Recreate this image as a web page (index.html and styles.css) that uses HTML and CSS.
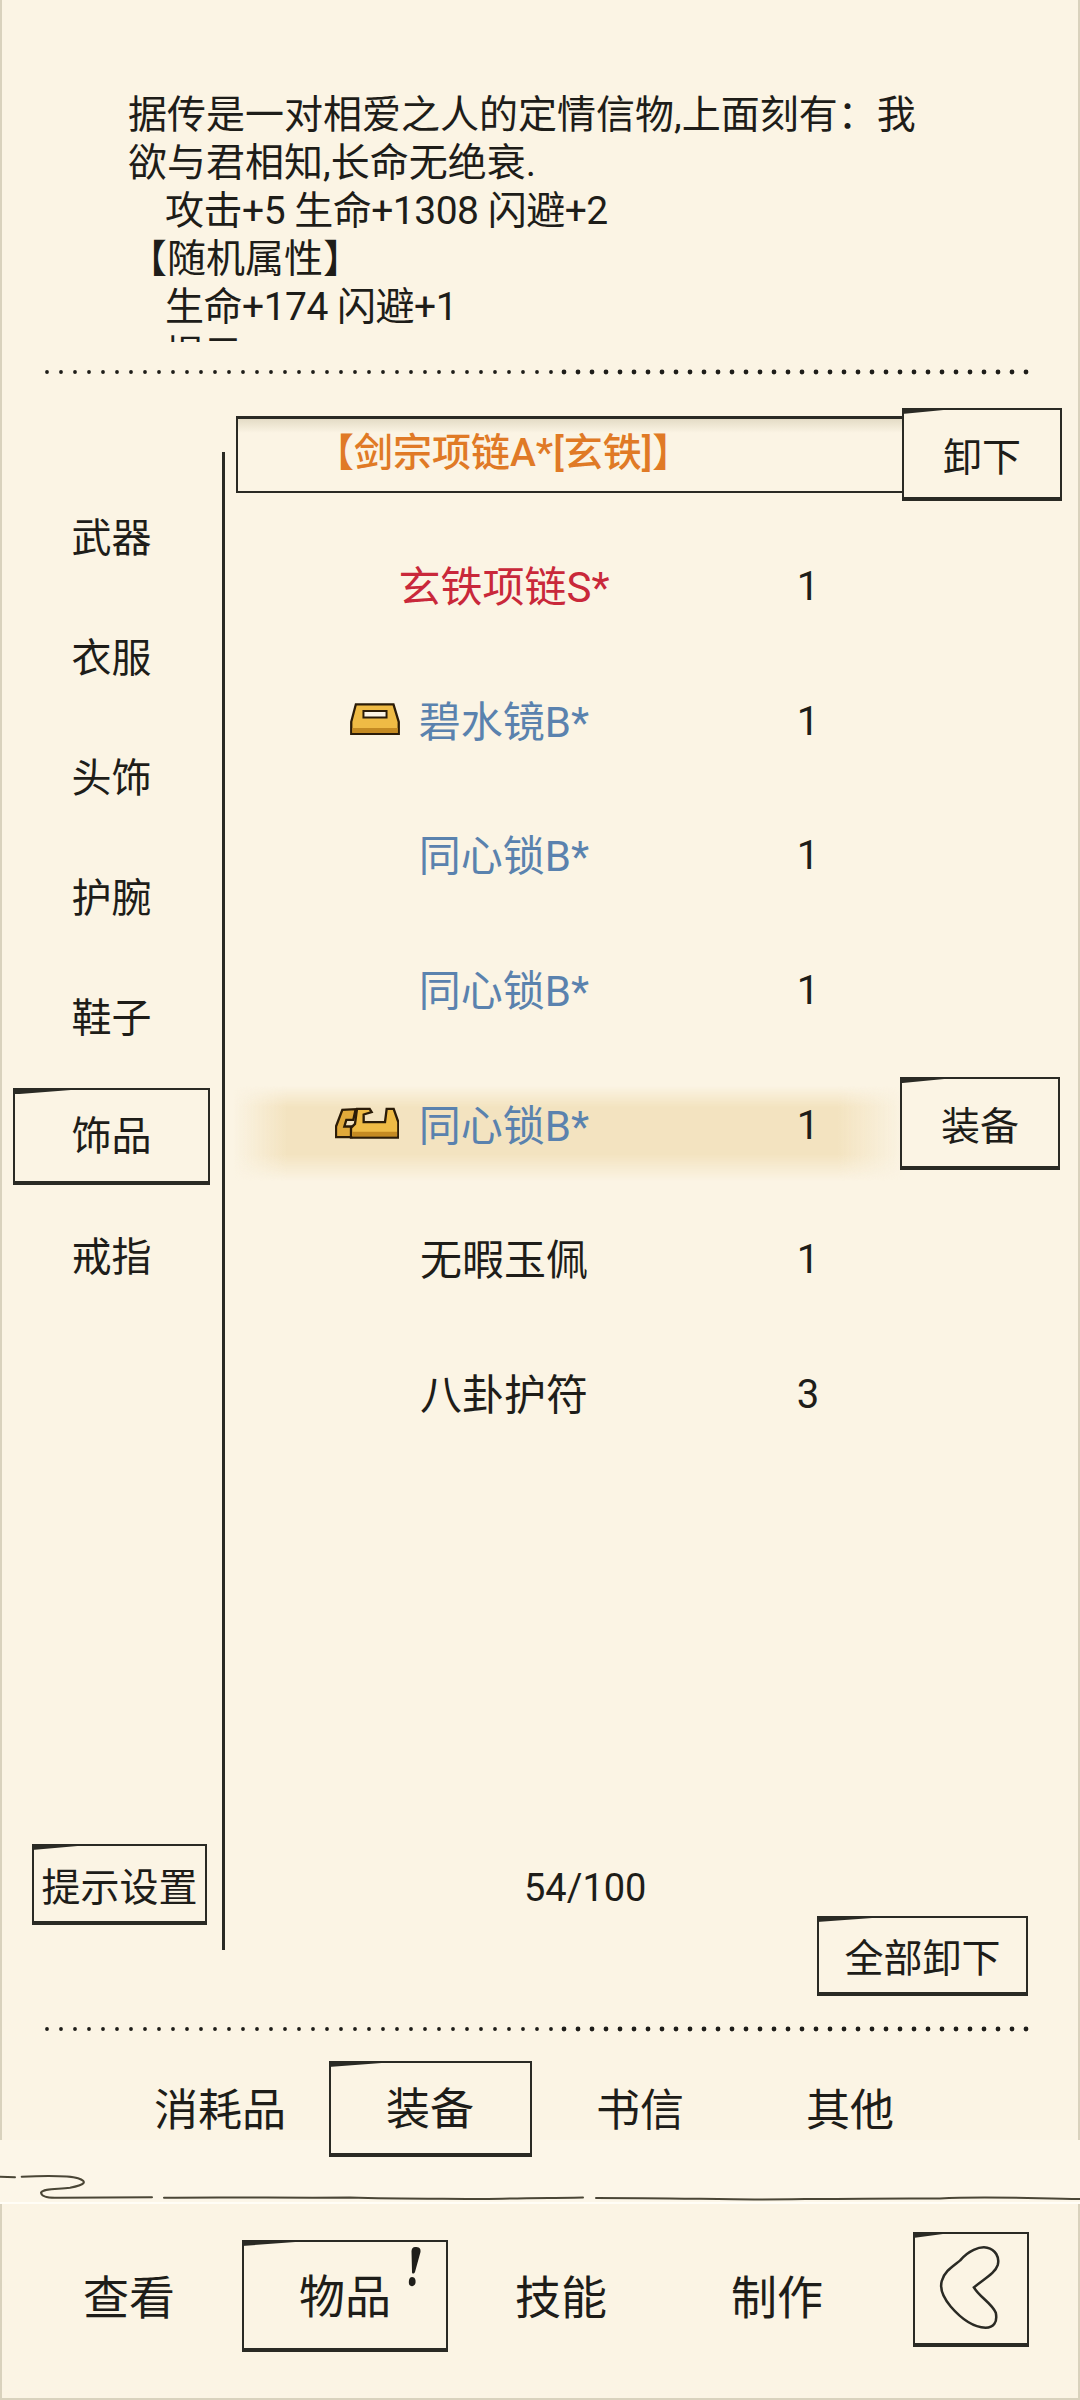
FILE: index.html
```html
<!DOCTYPE html>
<html lang="zh-CN">
<head>
    <meta charset="UTF-8">
    <title>物品</title>
    <link rel="stylesheet" href="styles.css">
</head>
<body>
<div class="page">
    <section class="desc">
        <p>据传是一对相爱之人的定情信物,上面刻有：我</p>
        <p>欲与君相知,长命无绝衰.</p>
        <p class="indent">攻击+5 生命+1308 闪避+2</p>
        <p>【随机属性】</p>
        <p class="indent">生命+174 闪避+1</p>
        <p class="indent">提示</p>
    </section>
    <svg class="dots" viewBox="0 0 992 6">
        <line class="dots-small" x1="3" y1="3" x2="520" y2="3"/>
        <line class="dots-big" x1="520" y1="3" x2="990" y2="3"/>
    </svg>

    <section class="main">
        <aside class="side">
            <a class="side-item">武器</a>
            <a class="side-item">衣服</a>
            <a class="side-item">头饰</a>
            <a class="side-item">护腕</a>
            <a class="side-item">鞋子</a>
            <a class="side-item sk">饰品</a>
            <a class="side-item">戒指</a>
            <a class="sk btn hint">提示设置</a>
        </aside>
        <div class="content">
            <div class="equipped">
                <div class="equipped-name">【剑宗项链A*[玄铁]】</div>
                <a class="sk btn row-btn">卸下</a>
            </div>
            <ul class="list">
                <li class="row"><span class="name red">玄铁项链S*</span><span class="num">1</span></li>
                <li class="row">
                    <span class="name blue">
                        <svg class="icon icon-one" viewBox="0 0 150 97">
                            <path d="M17 4H131L147 57V94H3V57Z" fill="#efbb45" stroke="#2b1c08" stroke-width="7"/>
                            <path d="M6 76H144V91H6Z" fill="#c48a22"/>
                            <path d="M40 24H110V44H40Z" fill="#fbf4e4" stroke="#2b1c08" stroke-width="6"/>
                        </svg>
                        碧水镜B*
                    </span>
                    <span class="num">1</span>
                </li>
                <li class="row"><span class="name blue">同心锁B*</span><span class="num">1</span></li>
                <li class="row"><span class="name blue">同心锁B*</span><span class="num">1</span></li>
                <li class="row picked">
                    <span class="name blue">
                        <svg class="icon icon-two" viewBox="0 0 192 95">
                            <path d="M3 90V58L22 8L62 6L55 38H34L28 58H50V90Z" fill="#e0a93a" stroke="#2b1c08" stroke-width="7"/>
                            <path d="M48 91V62L60 50L66 5H104L110 15L86 22V45H150L155 5H176L190 45V91Z" fill="#efbb45" stroke="#2b1c08" stroke-width="7"/>
                            <path d="M52 74H186V88H52Z" fill="#c48a22"/>
                        </svg>
                        同心锁B*
                    </span>
                    <span class="num">1</span>
                    <a class="sk btn row-btn">装备</a>
                </li>
                <li class="row"><span class="name">无暇玉佩</span><span class="num">1</span></li>
                <li class="row"><span class="name">八卦护符</span><span class="num">3</span></li>
            </ul>
            <div class="bag-count">54/100</div>
            <a class="sk btn unload-all">全部卸下</a>
        </div>
    </section>

    <svg class="dots dots-low" viewBox="0 0 992 6">
        <line class="dots-small" x1="3" y1="3" x2="520" y2="3"/>
        <line class="dots-big" x1="520" y1="3" x2="990" y2="3"/>
    </svg>

    <nav class="tabs">
        <a class="tab">消耗品</a>
        <a class="tab sk">装备</a>
        <a class="tab">书信</a>
        <a class="tab">其他</a>
    </nav>

    <div class="strip">
        <svg class="squiggle" viewBox="0 0 1080 62" fill="none" stroke="#4a4636" stroke-width="2" stroke-linecap="round">
            <path d="M0 36.7L15 37.3M21.7 36.7C40 36 66.7 35 78 38.3C88 41.7 85 45 70 47.7C56.7 49.3 43 48.3 41 52.7C41.7 57.3 50 58.3 60 57.7L152 57.3"/>
            <path d="M164 57.7C220 57 300 58 350 57.5C400 59 450 58.5 482 59C520 58 560 58 583 57.5"/>
            <path d="M596 58C660 58 700 59 760 59.5C820 59 880 58 940 58.5C980 56 1020 58 1080 59"/>
        </svg>
    </div>

    <nav class="bottom">
        <a class="bottom-item">查看</a>
        <a class="bottom-item sk">物品
            <svg class="alert" viewBox="0 0 16 40"><path d="M9 0C13 0 15 1 14.500 5L9 25C8 27 6 27 6 25L5.500 4C6 1 7 0 9 0ZM6 30C9 30 10 33 9.500 36C8.500 40 4 40 3 37C2.500 33 3.500 30 6 30Z" fill="#1f1e1a"/></svg>
        </a>
        <a class="bottom-item">技能</a>
        <a class="bottom-item">制作</a>
        <a class="sk back">
            <svg class="back-icon" viewBox="100 97 348 343" fill="none" stroke="#2a2a24" stroke-width="8">
                <path d="M240 180C265 150 300 135 325 140C350 145 365 170 358 195C350 220 320 235 283 265C300 295 340 315 352 345C358 375 345 392 320 392C280 390 240 360 210 325C185 295 175 270 182 245C190 215 215 200 240 180Z"/>
            </svg>
        </a>
    </nav>
</div>
</body>
</html>
```

FILE: styles.css
```css
*{
    margin: 0;
    padding: 0;
    box-sizing: border-box;
}
body{
    background: #fbf4e4;
    color: #1e1d19;
    font-family: Roboto, "Noto Sans CJK SC", sans-serif;
}
.page{
    width: 1080px;
    height: 2400px;
    overflow: hidden;
    box-shadow: inset 2px 0 #d9d2bd, inset -2px 0 #d9d2bd, inset 0 -2px #d9d2bd;
}

/* hand drawn box */
.sk{
    position: relative;
    border: 2px solid #2a2a24;
    border-bottom-width: 4px;
}
.sk::before{
    content: "";
    position: absolute;
    top: -2px;
    left: -2px;
    width: 40%;
    height: 6px;
    background: #2a2a24;
    clip-path: polygon(0 0, 100% 0, 0 100%);
}
.btn{
    display: flex;
    align-items: center;
    justify-content: center;
    font-size: 39px;
}

.desc{
    height: 342px;
    padding: 91px 0 0 128px;
    overflow: hidden;
    font-size: 39px;
    line-height: 48px;
}
.indent{
    padding-left: 37px;
    letter-spacing: -0.5px;
}
.dots{
    display: block;
    width: 992px;
    height: 6px;
    margin: 27px 0 0 44px;
    fill: none;
    stroke: #1e1d19;
    stroke-linecap: round;
    stroke-dasharray: 0 14;
}
.dots-small{
    stroke-width: 3.800px;
}
.dots-big{
    stroke-width: 4.800px;
}
.dots-low{
    margin-top: 30px;
}

.main{
    display: flex;
    height: 1588px;
    margin-top: 33px;
}
.side{
    display: flex;
    flex-direction: column;
    width: 225px;
    height: 1498px;
    margin-top: 44px;
    padding: 23px 0 25px 13px;
    border-right: 3px solid #2a2a24;
}
.side-item{
    display: flex;
    align-items: center;
    justify-content: center;
    flex: none;
    width: 197px;
    height: 119.900px;
    font-size: 40px;
}
.side-item.sk{
    height: 97px;
    margin: 14px 0 8.900px;
    padding-bottom: 5px;
}
.hint{
    width: 175px;
    height: 81px;
    margin: auto 0 0 19px;
}

.content{
    display: flex;
    flex-direction: column;
    flex: 1;
}
.equipped{
    display: flex;
    align-items: center;
    padding-left: 11px;
}
.equipped-name{
    width: 666px;
    height: 77px;
    padding-left: 77px;
    border: solid #2a2a24;
    border-width: 3px 0 2px 2px;
    background: linear-gradient(180deg, #e4dcc6, #fbf4e4 14px);
    color: #e07a26;
    font-size: 39px;
    font-weight: 500;
    line-height: 68px;
}
.row-btn{
    width: 160px;
    height: 93px;
    flex: none;
}
.list{
    margin-top: 17px;
    list-style: none;
}
.row{
    position: relative;
    display: flex;
    align-items: center;
    height: 134.600px;
    font-size: 42px;
}
.picked::before{
    content: "";
    position: absolute;
    left: 8px;
    top: 30px;
    width: 672px;
    height: 95px;
    background: linear-gradient(90deg, #fbf4e400, #f3e3c0 8%, #f3e3c0 90%, #fbf4e400);
    -webkit-mask-image: linear-gradient(180deg, transparent, #000 22%, #000 72%, transparent);
}
.name{
    position: relative;
    width: 558px;
    padding-bottom: 3px;
    text-align: center;
}
.num{
    position: relative;
    width: 50px;
    padding-top: 3px;
    text-align: center;
    font-size: 40px;
}
.picked .row-btn{
    margin-left: 67px;
}
.red{
    color: #c9283a;
}
.blue{
    color: #5a82ae;
}
.icon{
    position: absolute;
    top: 15px;
}
.icon-one{
    left: 125px;
    width: 50px;
    height: 32px;
}
.icon-two{
    left: 110px;
    width: 64px;
    height: 32px;
}
.bag-count{
    margin: auto 0 3px 299px;
    width: 100px;
    font-size: 38px;
    line-height: 50px;
    text-align: center;
    white-space: nowrap;
}
.unload-all{
    align-self: flex-end;
    width: 211px;
    height: 80px;
    margin-right: 52px;
}

.tabs{
    position: relative;
    z-index: 1;
    display: flex;
    height: 96px;
    margin-top: 29px;
    padding-left: 115px;
}
.tab{
    display: flex;
    align-items: center;
    justify-content: center;
    width: 210px;
    padding-bottom: 5px;
    font-size: 44px;
}
.tab.sk{
    width: 203px;
    margin: 0 3.500px;
}

.strip{
    height: 64px;
    margin-top: -17px;
    background: #fcf6e8;
    border-bottom: 2px solid #fffdf6;
}
.squiggle{
    display: block;
    width: 1080px;
    height: 62px;
}

.bottom{
    display: flex;
    align-items: flex-start;
    padding: 36px 0 0 21px;
}
.bottom-item{
    display: flex;
    align-items: center;
    justify-content: center;
    width: 216px;
    height: 112px;
    padding-bottom: 5px;
    font-size: 46px;
}
.bottom-item.sk{
    width: 206px;
    margin: 0 5px;
}
.alert{
    position: absolute;
    left: 162px;
    top: 5px;
    width: 16px;
    height: 40px;
}
.back{
    display: flex;
    align-items: center;
    justify-content: center;
    width: 116px;
    height: 115px;
    margin: -8px 0 0 28px;
    flex: none;
}
.back-icon{
    width: 112px;
    height: 109px;
}
```
